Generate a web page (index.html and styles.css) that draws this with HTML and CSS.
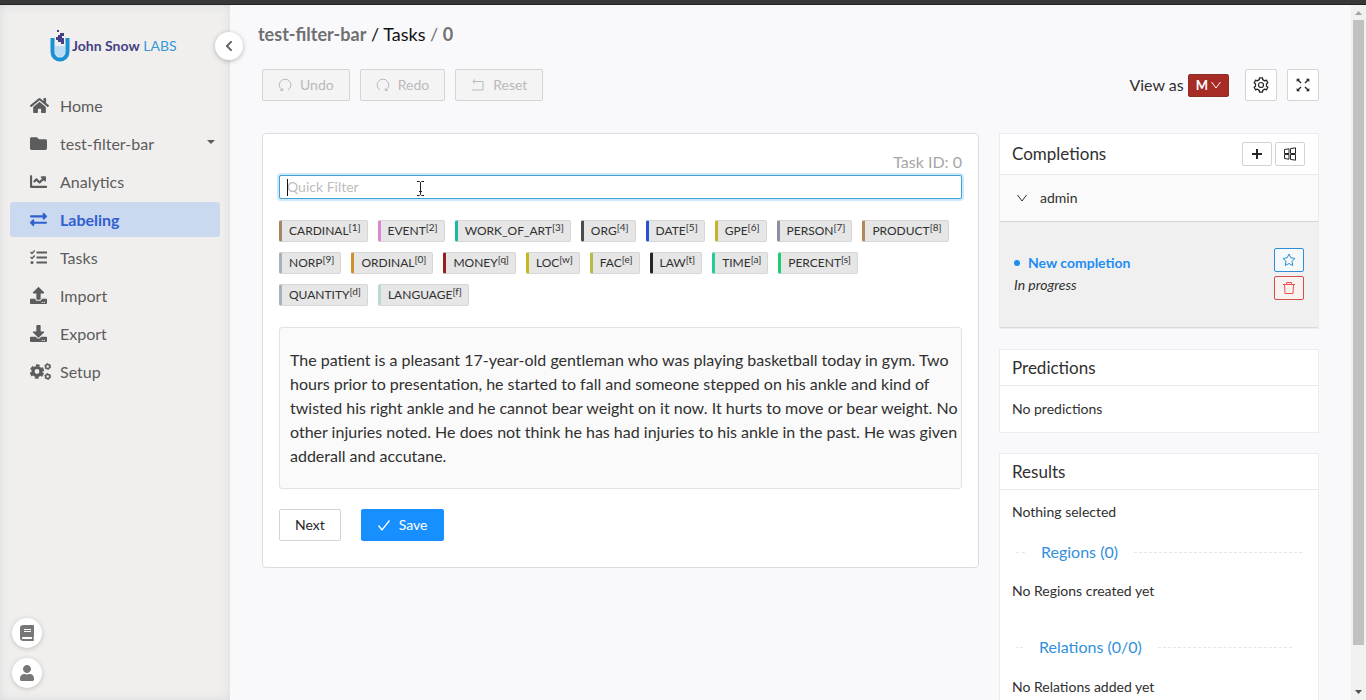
FILE: index.html
```html
<!DOCTYPE html>
<html lang="en">
<head>
<meta charset="utf-8">
<title>test-filter-bar / Tasks / 0</title>
<link rel="stylesheet" href="styles.css">
</head>
<body>
<div class="topstrip"></div>
<div class="app">
  <aside class="sidebar">
    <a class="logo" href="#">
      <svg width="20" height="34" viewBox="0 0 20 34" aria-hidden="true">
        <path class="tube" d="M2.500 9v14a7.500 7.500 0 0 0 15 0V9"/>
        <path d="M5 17h10v6a5 5 0 0 1-10 0z" fill="#b9dcf4"/>
        <path d="M10 4h4v3h-2v2h2v6h-3v-2H8v-2H6V8h2V6h2zM7 1h2v2H7z" fill="#453f85"/>
      </svg>
      <span class="logo-text"><b>John Snow</b> LABS</span>
    </a>
    <button class="collapse" aria-label="Collapse menu"><svg width="8" height="12" viewBox="0 0 320 512"><path d="M34.520 239.030L228.870 44.690c9.370-9.370 24.570-9.370 33.940 0l22.670 22.670c9.360 9.360 9.370 24.520.04 33.900L131.490 256l154.020 154.750c9.340 9.380 9.320 24.540-.04 33.900l-22.670 22.670c-9.370 9.370-24.570 9.370-33.940 0L34.520 272.970c-9.370-9.370-9.370-24.570 0-33.940z"/></svg></button>
    <nav class="menu">
      <a href="#"><svg width="19" height="17" viewBox="0 0 576 512"><path d="M280.370 148.260L96 300.110V464a16 16 0 0 0 16 16l112.060-.29a16 16 0 0 0 15.920-16V368a16 16 0 0 1 16-16h64a16 16 0 0 1 16 16v95.640a16 16 0 0 0 16 16.050L464 480a16 16 0 0 0 16-16V300L295.670 148.260a12.190 12.190 0 0 0-15.300 0zM571.600 251.470L488 182.560V44.050a12 12 0 0 0-12-12h-56a12 12 0 0 0-12 12v72.610L318.470 43a48 48 0 0 0-61 0L4.340 251.470a12 12 0 0 0-1.600 16.900l25.500 31A12 12 0 0 0 45.150 301l235.220-193.740a12.190 12.190 0 0 1 15.300 0L530.900 301a12 12 0 0 0 16.900-1.600l25.500-31a12 12 0 0 0-1.700-16.930z"/></svg><span>Home</span></a>
      <a href="#"><svg width="17" height="17" viewBox="0 0 512 512"><path d="M464 128H272l-64-64H48C21.490 64 0 85.490 0 112v288c0 26.510 21.490 48 48 48h416c26.510 0 48-21.490 48-48V176c0-26.510-21.490-48-48-48z"/></svg><span>test-filter-bar</span><svg width="8" height="14" viewBox="0 0 8 14"><path d="M0 3h8L4 7z"/></svg></a>
      <a href="#"><svg width="17" height="17" viewBox="0 0 512 512"><path d="M496 384H64V80c0-8.840-7.160-16-16-16H16C7.160 64 0 71.160 0 80v336c0 17.670 14.330 32 32 32h464c8.840 0 16-7.160 16-16v-32c0-8.840-7.160-16-16-16zM464 96H345.940c-21.380 0-32.090 25.850-16.970 40.970l32.400 32.400L288 242.750l-73.370-73.370c-12.500-12.500-32.760-12.500-45.250 0l-68.690 68.690c-6.250 6.250-6.250 16.380 0 22.630l22.620 22.620c6.250 6.250 16.380 6.250 22.630 0L192 237.250l73.370 73.370c12.500 12.500 32.760 12.500 45.250 0l96-96 32.400 32.400c15.120 15.120 40.970 4.410 40.970-16.970V112c.01-8.840-7.150-16-15.990-16z"/></svg><span>Analytics</span></a>
      <a href="#" class="active"><svg width="17" height="17" viewBox="0 0 512 512"><path d="M0 168v-16c0-13.255 10.745-24 24-24h360V80c0-21.367 25.899-32.042 40.971-16.971l80 80c9.372 9.373 9.372 24.569 0 33.941l-80 80C409.956 271.982 384 261.456 384 240v-48H24c-13.255 0-24-10.745-24-24zm488 152H128v-48c0-21.314-25.862-32.080-40.971-16.971l-80 80c-9.372 9.373-9.372 24.569 0 33.941l80 80C102.057 463.997 128 453.437 128 432v-48h360c13.255 0 24-10.745 24-24v-16c0-13.255-10.745-24-24-24z"/></svg><span>Labeling</span></a>
      <a href="#"><svg width="17" height="17" viewBox="0 0 17 17"><path d="M6.500 3.500H17M6.500 8.500H17M6.500 13.500H17" stroke="currentColor" stroke-width="2"/><path class="check" d="M.500 3l1.500 1.500L4.700 1.500M.500 8L2 9.500l2.700-3"/><circle cx="2" cy="13.500" r="1.500"/></svg><span>Tasks</span></a>
      <a href="#"><svg width="17" height="17" viewBox="0 0 512 512"><path d="M296 384h-80c-13.300 0-24-10.700-24-24V192h-87.700c-17.800 0-26.700-21.500-14.100-34.100L242.300 5.700c7.500-7.500 19.800-7.500 27.300 0l152.200 152.200c12.600 12.600 3.700 34.100-14.100 34.100H320v168c0 13.300-10.700 24-24 24zm216-8v112c0 13.300-10.700 24-24 24H24c-13.300 0-24-10.700-24-24V376c0-13.300 10.700-24 24-24h136v8c0 30.900 25.100 56 56 56h80c30.900 0 56-25.100 56-56v-8h136c13.300 0 24 10.700 24 24zm-124 88c0-11-9-20-20-20s-20 9-20 20 9 20 20 20 20-9 20-20zm64 0c0-11-9-20-20-20s-20 9-20 20 9 20 20 20 20-9 20-20z"/></svg><span>Import</span></a>
      <a href="#"><svg width="17" height="17" viewBox="0 0 512 512"><path d="M216 0h80c13.300 0 24 10.700 24 24v168h87.700c17.800 0 26.700 21.500 14.100 34.100L269.700 378.300c-7.500 7.500-19.800 7.500-27.300 0L90.100 226.100c-12.600-12.600-3.700-34.100 14.100-34.100H192V24c0-13.300 10.700-24 24-24zm296 376v112c0 13.300-10.700 24-24 24H24c-13.300 0-24-10.700-24-24V376c0-13.300 10.700-24 24-24h146.700l49 49c20.100 20.100 52.500 20.100 72.600 0l49-49H488c13.300 0 24 10.700 24 24zm-124 88c0-11-9-20-20-20s-20 9-20 20 9 20 20 20 20-9 20-20zm64 0c0-11-9-20-20-20s-20 9-20 20 9 20 20 20 20-9 20-20z"/></svg><span>Export</span></a>
      <a href="#"><svg class="line" width="22" height="17" viewBox="0 0 22 17"><circle cx="7" cy="8.500" r="4" stroke-width="3.200"/><circle cx="7" cy="8.500" r="6.200" stroke-width="2" stroke-dasharray="3.800 2.693" stroke-dashoffset="-1.400"/><circle cx="17.700" cy="3.500" r="2" stroke-width="1.500"/><circle cx="17.700" cy="3.500" r="3" stroke-width="1" stroke-dasharray="1.700 1.440"/><circle cx="17.700" cy="13.500" r="2" stroke-width="1.500"/><circle cx="17.700" cy="13.500" r="3" stroke-width="1" stroke-dasharray="1.700 1.440"/></svg><span>Setup</span></a>
    </nav>
    <div class="side-foot">
      <button class="round" aria-label="Documentation"><svg width="14" height="16" viewBox="0 0 448 512"><path d="M448 360V24c0-13.300-10.700-24-24-24H96C43 0 0 43 0 96v320c0 53 43 96 96 96h328c13.300 0 24-10.700 24-24v-16c0-7.500-3.500-14.300-8.900-18.700-4.200-15.400-4.200-59.300 0-74.700 5.400-4.300 8.900-11.100 8.900-18.600zM128 134c0-3.300 2.700-6 6-6h212c3.300 0 6 2.700 6 6v20c0 3.300-2.700 6-6 6H134c-3.300 0-6-2.700-6-6v-20zm0 64c0-3.300 2.700-6 6-6h212c3.300 0 6 2.700 6 6v20c0 3.300-2.700 6-6 6H134c-3.300 0-6-2.700-6-6v-20zm253.400 250H96c-17.700 0-32-14.300-32-32 0-17.600 14.400-32 32-32h285.400c-1.900 17.100-1.900 46.900 0 64z"/></svg></button>
      <button class="round" aria-label="Account"><svg width="14" height="16" viewBox="0 0 448 512"><path d="M224 256c70.700 0 128-57.300 128-128S294.700 0 224 0 96 57.300 96 128s57.300 128 128 128zm89.600 32h-16.700c-22.200 10.200-46.900 16-72.900 16s-50.600-5.800-72.900-16h-16.700C60.200 288 0 348.200 0 422.400V464c0 26.500 21.500 48 48 48h352c26.500 0 48-21.500 48-48v-41.600c0-74.200-60.200-134.400-134.400-134.400z"/></svg></button>
    </div>
  </aside>

  <main class="main">
    <h1 class="crumbs"><a href="#" class="crumb-strong">test-filter-bar</a> <span class="dark">/ <a href="#">Tasks</a></span> <span>/ <b>0</b></span></h1>
    <div class="toolbar">
      <button class="btn" disabled><svg class="line" width="14" height="14" viewBox="0 0 14 14"><path d="M4.500 12.200A5.800 5.800 0 1 1 10 12M2.200 12.500h2.500v-2.300"/></svg>Undo</button>
      <button class="btn" disabled><svg class="line" width="14" height="14" viewBox="0 0 14 14"><path d="M4 12A5.800 5.800 0 1 1 9.500 12.200M11.800 12.500H9.300v-2.300"/></svg>Redo</button>
      <button class="btn" disabled><svg class="line" width="14" height="14" viewBox="0 0 14 14"><path d="M2 3.500h10v8.500H1M4 1.500l-2.200 2L4 5.500"/></svg>Reset</button>
      <div class="view-as"><span>View as</span>
        <button class="mode">M<svg class="line" width="10" height="10" viewBox="0 0 10 10"><path d="M.500 2L5 8l4.500-6"/></svg></button>
      </div>
      <button class="btn square" aria-label="Settings"><svg class="line" width="16" height="16" viewBox="0 0 16 16"><path stroke-width="1.300" stroke-linejoin="round" d="M6.270 2.670L6.500.960h3l.230 1.710 2.020 1.170 1.600-.660 1.500 2.600-1.370 1.060v2.320l1.370 1.060-1.500 2.600-1.600-.660-2.020 1.170-.230 1.710h-3l-.230-1.710-2.020-1.170-1.600.660-1.500-2.600 1.370-1.060V6.840L1.150 5.780l1.500-2.600 1.600.660z"/><circle cx="8" cy="8" r="2.500" stroke-width="1.200"/></svg></button>
      <button class="btn square" aria-label="Full screen"><svg class="line" width="14" height="14" viewBox="0 0 14 14"><path stroke-width="1.400" d="M1.500 1.500L5 5M12.500 1.500L9 5M1.500 12.500L5 9M12.500 12.500L9 9"/><path fill="currentColor" stroke="none" d="M.700.700h3.400L.700 4.100zM13.300.700H9.900l3.400 3.400zM.700 13.300h3.400L.700 9.900zM13.300 13.300H9.900l3.400-3.400z"/></svg></button>
    </div>

    <div class="columns">
      <section class="card">
        <div class="task-id">Task ID: 0</div>
        <div class="filter"><input type="text" placeholder="Quick Filter" aria-label="Quick Filter"><span class="text-caret"></span>
          <svg class="pointer" width="9" height="17" viewBox="0 0 9 17"><path d="M1 1.500h2.500l1 1 1-1H8M4.500 2v12.500M1 15.500h2.500l1-1 1 1H8M3 11.500h3" fill="none" stroke="#222"/></svg></div>
        <div class="tags">
          <span class="tag c-brown">CARDINAL<sup>[1]</sup></span>
          <span class="tag c-pink">EVENT<sup>[2]</sup></span>
          <span class="tag c-teal">WORK_OF_ART<sup>[3]</sup></span>
          <span class="tag c-gray">ORG<sup>[4]</sup></span>
          <span class="tag c-blue">DATE<sup>[5]</sup></span>
          <span class="tag c-olive">GPE<sup>[6]</sup></span>
          <span class="tag c-slate">PERSON<sup>[7]</sup></span>
          <span class="tag c-tan">PRODUCT<sup>[8]</sup></span>
          <span class="tag c-steel">NORP<sup>[9]</sup></span>
          <span class="tag c-orange">ORDINAL<sup>[0]</sup></span>
          <span class="tag c-red">MONEY<sup>[q]</sup></span>
          <span class="tag c-yellow">LOC<sup>[w]</sup></span>
          <span class="tag c-lime">FAC<sup>[e]</sup></span>
          <span class="tag c-black">LAW<sup>[t]</sup></span>
          <span class="tag c-aqua">TIME<sup>[a]</sup></span>
          <span class="tag c-green">PERCENT<sup>[s]</sup></span>
          <span class="tag c-steel">QUANTITY<sup>[d]</sup></span>
          <span class="tag c-mint">LANGUAGE<sup>[f]</sup></span>
        </div>
        <p class="document">The patient is a pleasant 17-year-old gentleman who was playing basketball today in gym. Two hours prior to presentation, he started to fall and someone stepped on his ankle and kind of twisted his right ankle and he cannot bear weight on it now. It hurts to move or bear weight. No other injuries noted. He does not think he has had injuries to his ankle in the past. He was given adderall and accutane.</p>
        <div class="actions">
          <button class="btn">Next</button>
          <button class="btn primary"><svg class="line" width="14" height="14" viewBox="0 0 14 14"><path stroke-width="1.300" d="M1.500 7.500L5 12l7.500-9.500"/></svg>Save</button>
        </div>
      </section>

      <aside class="panels">
        <section class="panel">
          <header class="completions-head"><h2>Completions</h2>
            <button class="btn small" aria-label="New completion"><svg class="line" width="12" height="12" viewBox="0 0 12 12"><path stroke-width="2" d="M6 1v10M1 6h10"/></svg></button>
            <button class="btn small" aria-label="Compare"><svg class="line" width="14" height="14" viewBox="0 0 14 14"><path d="M1.500 2.500l4.500-.700v4.700H1.500zM7.500 1.600l5-.800v5.700h-5zM1.500 7.500H6v4.700l-4.500-.700zM7.500 7.500h5v5.700l-5-.800z"/></svg></button>
          </header>
          <div class="admin"><svg class="line" width="10" height="10" viewBox="0 0 10 10"><path d="M.500 2L5 8l4.500-6"/></svg>admin</div>
          <div class="completion">
            <div class="completion-text">
              <a href="#"><i class="dot"></i>New completion</a>
              <em>In progress</em>
            </div>
            <div class="completion-actions">
              <button class="btn small ghost-blue" aria-label="Star"><svg class="line" width="14" height="14" viewBox="0 0 14 14"><path stroke-linejoin="round" d="M7 1l1.800 3.800 4.200.600-3 2.900.700 4.200L7 10.500l-3.700 2 .700-4.200-3-2.900 4.200-.600z"/></svg></button>
              <button class="btn small ghost-red" aria-label="Delete"><svg class="line" width="14" height="14" viewBox="0 0 14 14"><path d="M1 3.500h12M4.500 3.500v-2h5v2M2.500 3.500l.500 9h8l.500-9"/></svg></button>
            </div>
          </div>
        </section>
        <section class="panel">
          <header><h2>Predictions</h2></header>
          <p class="panel-text">No predictions</p>
        </section>
        <section class="panel">
          <header><h2>Results</h2></header>
          <div class="results">
            <p>Nothing selected</p>
            <h3 class="divider regions">Regions (0)</h3>
            <p>No Regions created yet</p>
            <h3 class="divider relations">Relations (0/0)</h3>
            <p>No Relations added yet</p>
          </div>
        </section>
      </aside>
    </div>
  </main>
  <div class="scrollbar" aria-hidden="true">
    <svg class="arrow-up" width="7" height="4" viewBox="0 0 7 4"><path d="M0 4h7L3.500 0z"/></svg>
    <div class="track"><div class="thumb"></div></div>
    <svg width="7" height="4" viewBox="0 0 7 4"><path d="M0 0h7L3.500 4z"/></svg>
  </div>
</div>
</body>
</html>
```
FILE: styles.css
```css
* { box-sizing: border-box; }
body {
  margin: 0;
  height: 100vh;
  display: flex;
  flex-direction: column;
  overflow: hidden;
  background: #f9f9fc;
  color: #303030;
  font: 14px/22px Lato, "Open Sans", sans-serif;
}
a { color: inherit; text-decoration: none; }
h1, h2, h3, p { margin: 0; font-weight: 400; }
button, input { font: inherit; margin: 0; }
svg { fill: currentColor; flex: none; display: block; }
svg.line { fill: none; stroke: currentColor; }

.topstrip { flex: none; height: 5px; background: #383838; border-bottom: 1px solid #222; }
.app { flex: 1; min-height: 0; display: flex; }

/* Sidebar */
.sidebar {
  position: relative;
  flex: none;
  width: 230px;
  display: flex;
  flex-direction: column;
  background: #f0efee;
  box-shadow: inset 0 0 10px #d9dadb;
}
.logo { display: flex; align-items: center; gap: 2px; padding: 23px 0 0 50px; height: 58px; }
.logo-text { font-size: 14px; color: #3498d8; white-space: nowrap; }
.logo-text b { color: #453f85; }
.tube { fill: none; stroke: #1b91d3; stroke-width: 4; }
.check { fill: none; stroke: currentColor; stroke-width: 1.4; }
.collapse {
  position: absolute;
  top: 27px;
  right: -13px;
  z-index: 1;
  width: 28px;
  height: 28px;
  display: grid;
  place-items: center;
  padding: 0;
  border: 0;
  border-radius: 50%;
  background: #fff;
  color: #606060;
  box-shadow: 0 1px 5px #0004;
}
.menu { display: flex; flex-direction: column; gap: 3px; padding: 25px 10px 0; }
.menu a {
  display: grid;
  grid-template-columns: 30px 1fr auto;
  align-items: center;
  height: 35px;
  padding: 0 5px 0 20px;
  border-radius: 3px;
  color: #5c5c5c;
  font-size: 16px;
}
.menu .active { background: #cad9ef; color: #3060cf; font-weight: 700; }
.side-foot { display: flex; flex-direction: column; gap: 10px; margin-top: auto; padding: 0 12px 12px; }
.round {
  width: 30px;
  height: 30px;
  display: grid;
  place-items: center;
  padding: 0;
  border: 0;
  border-radius: 50%;
  background: #fff;
  color: #777;
  box-shadow: 0 1px 5px #0003;
}

/* Main */
.main { flex: 1; min-width: 0; padding: 15px 32px 0; overflow: hidden; }
.crumbs { margin-left: -4px; font-size: 18px; line-height: 28px; color: #707070; }
.crumb-strong, .crumbs b { font-weight: 700; }
.crumbs .dark { color: #111; }
.toolbar { display: flex; align-items: center; gap: 10px; margin-top: 21px; }
.btn {
  display: inline-flex;
  align-items: center;
  justify-content: center;
  gap: 8px;
  height: 32px;
  padding: 0 15px;
  border: 1px solid #d4d4d4;
  border-radius: 2px;
  background: #fff;
  color: #262626;
}
.btn:disabled { background: #f4f4f5; color: #b9b9b9; }
.btn.square { width: 32px; padding: 0; }
.btn.small { width: 30px; height: 24px; padding: 0; }
.btn.primary { border-color: #188fff; background: #188fff; color: #fff; }
.btn.ghost-blue { border-color: #2c8fd6; background: #f6f9fc; color: #2c8fd6; }
.btn.ghost-red { border-color: #d2504a; background: #f8f2f1; color: #f05050; }
.view-as { display: flex; align-items: center; gap: 4px; margin-left: auto; margin-right: 6px; font-size: 16px; }
.mode {
  display: flex;
  align-items: center;
  gap: 3px;
  height: 23px;
  padding: 0 7px;
  border: 1px solid #8b3028;
  border-radius: 2px;
  background: #a82c26;
  color: #fff;
  font-size: 13px;
  font-weight: 700;
}
.columns { display: grid; grid-template-columns: minmax(0, 1fr) 320px; gap: 20px; align-items: start; margin-top: 32px; }

/* Task card */
.card { padding: 17px 16px 26px; border: 1px solid #dcdce0; border-radius: 4px; background: #fff; }
.task-id { text-align: right; font-size: 16px; line-height: 22px; color: #a6a6a6; }
.filter { position: relative; display: flex; margin-top: 2px; }
.filter input {
  width: 100%;
  height: 24px;
  padding: 0 7px 1px;
  border: 1px solid #40a0d8;
  border-radius: 2px;
  outline: 0;
  background: #fff;
  box-shadow: 0 0 0 2px #cfe9fa;
}
.filter input::placeholder { color: #bdbdbd; }
.text-caret { position: absolute; left: 8px; top: 4px; width: 1px; height: 17px; background: #111; }
.pointer { position: absolute; left: 137px; top: 5px; }
.tags { display: flex; flex-wrap: wrap; gap: 10px; margin-top: 21px; padding-right: 10px; }
.tag {
  height: 22px;
  padding: 0 6px 0 7px;
  border: 1px solid #d6d6d6;
  border-left-width: 3px;
  border-radius: 2px;
  background: #e6e6e6;
  font-size: 12px;
  line-height: 20px;
}
.tag sup { font-size: 10px; line-height: 0; vertical-align: 4px; }
.c-brown { border-left-color: #a58562; }
.c-pink { border-left-color: #dc86d2; }
.c-teal { border-left-color: #20b5a4; }
.c-gray { border-left-color: #4c4c4c; }
.c-blue { border-left-color: #2a4fd0; }
.c-olive { border-left-color: #c4b52c; }
.c-slate { border-left-color: #8a90a0; }
.c-tan { border-left-color: #b88759; }
.c-steel { border-left-color: #a6b3bd; }
.c-orange { border-left-color: #cc922c; }
.c-red { border-left-color: #962020; }
.c-yellow { border-left-color: #c6b71b; }
.c-lime { border-left-color: #b6bb48; }
.c-black { border-left-color: #262626; }
.c-aqua { border-left-color: #27cb98; }
.c-green { border-left-color: #1fcb76; }
.c-mint { border-left-color: #bcd8d0; }
.document {
  margin-top: 21px;
  padding: 20px 0 20px 10px;
  border: 1px solid #e2e2e4;
  border-radius: 3px;
  background: #fafafa;
  font-size: 16px;
  line-height: 24px;
}
.actions { display: flex; gap: 20px; margin-top: 20px; }

/* Right column */
.panels { display: grid; gap: 20px; }
.panel { border: 1px solid #ececef; background: #fff; }
.panel header { display: flex; align-items: center; height: 36px; padding: 0 12px; border-bottom: 1px solid #e9e9eb; }
.panel h2 { margin-right: auto; font-size: 17px; }
.panel .completions-head { height: 41px; gap: 3px; padding-right: 13px; }
.admin { display: flex; align-items: center; gap: 13px; height: 47px; padding: 0 17px; border-bottom: 1px solid #d3d3d3; background: #fafafa; }
.completion { display: flex; justify-content: space-between; padding: 26px 14px 27px; background: #f0f0f0; border-bottom: 1px solid #dadada; }
.completion-text { display: grid; align-content: center; }
.completion-text a { display: flex; align-items: center; gap: 8px; color: #1f8df0; font-weight: 700; }
.dot { width: 6px; height: 6px; border-radius: 50%; background: #1f8df0; }
.completion-actions { display: grid; gap: 4px; }
.panel-text { padding: 12px; }
.results { padding: 11px 12px; }
.divider { display: flex; align-items: center; gap: 16px; margin: 18px 4px 17px; font-size: 16px; line-height: 22px; color: #3290db; }
.divider::before, .divider::after { content: ""; border-top: 1px dashed #e6e6e8; }
.divider::before { width: 9px; }
.divider::after { flex: 1; }
.relations { margin: 34px 14px 18px 4px; }
.relations::before { width: 7px; }

/* Scrollbar */
.scrollbar { flex: none; width: 15px; display: flex; flex-direction: column; align-items: center; gap: 5px; padding: 6px 0; background: #f1f1f1; color: #505050; }
.arrow-up { color: #a3a3a3; }
.track { flex: 1; width: 11px; }
.thumb { height: 94%; background: #c1c1c1; }
```
